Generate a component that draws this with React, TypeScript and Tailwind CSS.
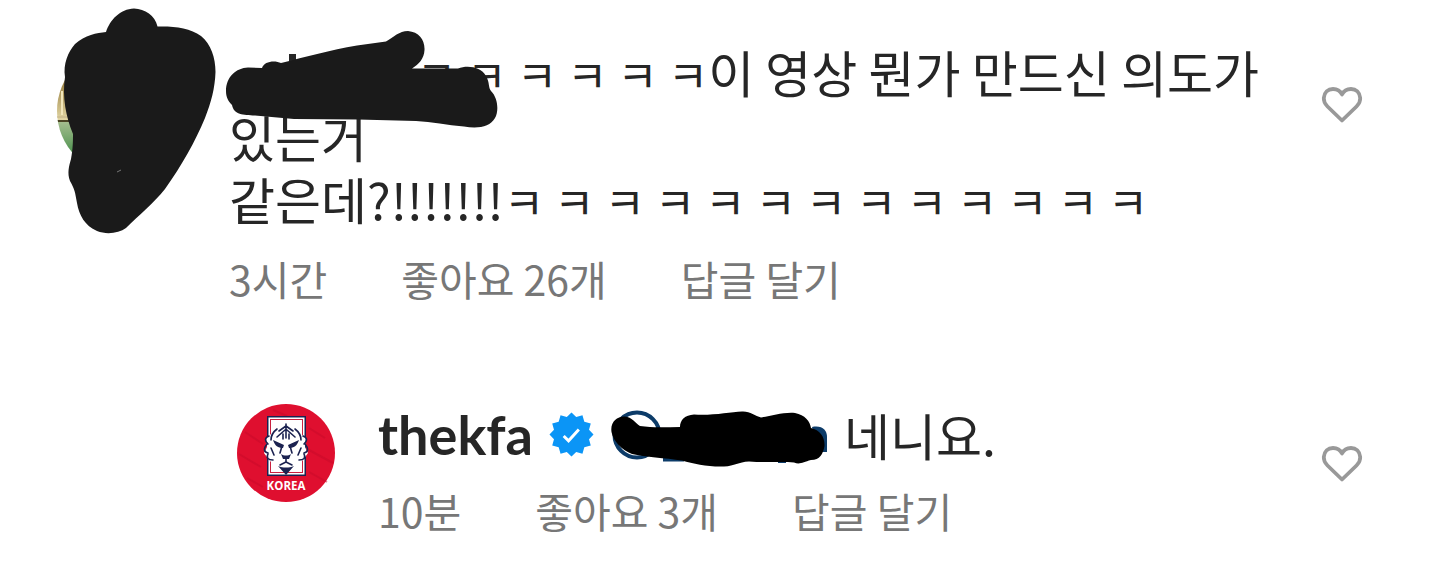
import { useState } from "react";

function HeartButton({ label }: { label: string }) {
  const [liked, setLiked] = useState(false);

  return (
    <button type="button" aria-label={label} aria-pressed={liked} onClick={() => setLiked(!liked)} className="shrink-0">
      <svg width="42" height="38" viewBox="0 0 42 38" fill={liked ? "#ed4956" : "none"}>
        <path
          d="M21 34.5 L6.5 20.5 C3.6 17.6 2.6 15 2.8 12 C3.2 6.6 7 3 12 3 C16 3 19.3 5 21 8.500 C22.7 5 26 3 30 3 C35 3 38.8 6.6 39.2 12 C39.4 15 38.4 17.6 35.5 20.5 Z"
          stroke={liked ? "#ed4956" : "#999999"}
          strokeWidth="3.8"
          strokeLinejoin="round"
        />
      </svg>
    </button>
  );
}

function Meta({ time, likes }: { time: string; likes: string }) {
  return (
    <div className="flex flex-wrap gap-x-[74px] text-[41px] leading-[60px] text-[#777777]">
      <span>{time}</span>
      <button type="button">{likes}</button>
      <button type="button">답글 달기</button>
    </div>
  );
}

function CommenterAvatar() {
  return (
    <div className="relative size-32 shrink-0">
      <svg viewBox="0 0 128 128" className="size-full">
        <defs>
          <clipPath id="photo">
            <circle cx="64" cy="64" r="64" />
          </clipPath>
          <linearGradient id="wall" x1="0" y1="0" x2="0" y2="1">
            <stop offset="0.4" stopColor="#8f7434" />
            <stop offset="1" stopColor="#e2d6a4" />
          </linearGradient>
          <linearGradient id="grass" x1="0" y1="0" x2="0" y2="1">
            <stop offset="0" stopColor="#a9c092" />
            <stop offset="0.6" stopColor="#4f9350" />
          </linearGradient>
        </defs>
        <g clipPath="url(#photo)">
          <rect width="128" height="73" fill="url(#wall)" />
          <rect y="73" width="128" height="55" fill="url(#grass)" />
          <path d="M0 70H40" stroke="#cfc093" strokeWidth="2" />
          <path d="M0 74H40" stroke="#4b4424" strokeWidth="2" />
          <path d="M5 44V68" stroke="#f1e6bb" strokeWidth="2" />
        </g>
      </svg>
      <svg width="168" height="240" viewBox="57 0 168 240" className="absolute left-0 -top-[47px] max-w-none">
        <path
          d="M106 32 C110 20 120 9 134 8.500 C145 9 155 15 157.500 26.500 C174 26 190 28 201 36 C211 44 215.500 58 215.500 72 C215 88 211 103 205 118 C195 142 182 165 165 189 C153 204 139 215 126 228 C119 233 107 235 97 231 C85 226 79 215 77 203 C75 192 75 190 70 181 C67 173 69 166 71 159 C73 149 73 140 73 134 C66 117 62 97 65 77 C63 64 68 52 75 44 C85 35 97 33 106 32 Z"
          fill="#1a1a1a"
        />
        <path d="M117 172l4-2" stroke="#777" strokeWidth="1" />
      </svg>
    </div>
  );
}

function TeamAvatar() {
  return (
    <svg width="98" height="98" viewBox="0 0 98 98" className="shrink-0" role="img" aria-label="thekfa">
      <circle cx="49" cy="49" r="49" fill="#df0f2f" />
      <g stroke="#c70a29" strokeWidth="2" fill="none" opacity="0.5">
        <path d="M8 28l18 12M2 50l22 13M10 74l16 9M72 24l16 10M72 46l24 13M72 68l18 10M36 6l14 6" />
      </g>
      <rect x="30" y="12" width="39" height="60" fill="#1b2250" />
      <rect x="31.500" y="13.500" width="36" height="57" fill="#fff" />
      <rect x="33.500" y="15.500" width="32" height="53" fill="none" stroke="#c9213f" strokeWidth="1" />
      <path
        d="M40 22 L49 18 L58 22 L64 30 L69 34 L68 43 L71 49 L66 56 L62 60 L49 69 L36 60 L32 56 L27 49 L30 43 L29 34 L34 30 Z"
        fill="#fff"
      />
      <g fill="none" stroke="#1b2250" strokeWidth="1.6" strokeLinecap="round" strokeLinejoin="round">
        <path d="M49 20v14M49 22l-7 5M49 22l7 5M48 26l-8 7M50 26l8 7M46 30v5M52 30v5" />
        <path d="M40 25c-4 3-6 7-6 11M58 25c4 3 6 7 6 11M32 32c-5 2-4 5-1 8M66 32c5 2 4 5 1 8" />
        <path d="M30 40c-4 5-3 8 1 9M68 40c4 5 3 8-1 9M31 50c-2 4 0 6 5 6M67 50c2 4 0 6-5 6" />
        <path d="M34 44l3 7M64 44l-3 7" />
        <path d="M45 42l-2 7M53 42l2 7M49 54v4M49 58l-6 3M49 58l6 3" />
      </g>
      <path d="M36 36l11 5-1 3c-5 0-8-2-10-8ZM62 36l-11 5 1 3c5 0 8-2 10-8Z" fill="#1b2250" />
      <path d="M44 50c3 2 7 2 10 0l-2 5h-6ZM41 62c5 2 11 2 16 0l-8 9Z" fill="#1b2250" />
      <text x="49" y="86" textAnchor="middle" fill="#fff" fontSize="11.500" fontWeight="700" fontFamily="'Open Sans', 'Noto Sans', sans-serif">
        KOREA
      </text>
    </svg>
  );
}

function VerifiedBadge() {
  return (
    <svg width="45" height="45" viewBox="0 0 46 46" className="shrink-0" role="img" aria-label="인증됨">
      <path
        d="M23 0.500 L27.800 5.100 L34.200 3.300 L36.100 9.900 L42.700 11.700 L40.900 18.200 L45.500 23 L40.900 27.800 L42.700 34.300 L36.100 36.100 L34.200 42.700 L27.800 40.900 L23 45.500 L18.200 40.900 L11.800 42.700 L9.900 36.100 L3.300 34.300 L5.100 27.800 L0.500 23 L5.100 18.200 L3.300 11.700 L9.900 9.900 L11.800 3.300 L18.200 5.100 Z"
        fill="#0b95f6"
      />
      <path d="M15 24.500l5 5L30.500 18" fill="none" stroke="#fff" strokeWidth="3" />
    </svg>
  );
}

// Marker strokes over the mentioned account
function HiddenMention() {
  return (
    <svg width="218" height="60" viewBox="610 404 218 60" className="shrink-0 overflow-visible" aria-hidden="true">
      <circle cx="637" cy="435" r="22.500" fill="none" stroke="#0c3b68" strokeWidth="4" />
      <path d="M663 459.500H684M778 461h8" stroke="#0c3b68" strokeWidth="4" />
      <path d="M812 427c10-2 15 3 15 10v15h-9z" fill="#0c3b68" />
      <path
        d="M611.500 432 C610 422 617 416 625 416.500 C632 417 635 423 640 426 C653 428 667 427 680 427 C680 420 685 415 694 414.500 C711 416 730 412 742 411.500 C750 411 755 416 761 417.500 C772 416 783 412 795 413 C805 415 810 421 811 428 C820 430 825 437 824.500 446 C823 454 820 460 811 460 C803 462 800 465 794 462.500 C781 461 765 463 749 461.500 C738 462 735 466 724 466.500 C708 467 694 464 682 460.500 C665 458 645 457 632 454 C622 450 613 441 611.500 432 Z"
        fill="#000"
      />
    </svg>
  );
}

// Marker strokes over the commenter's name
function HiddenName() {
  return (
    <svg width="276" height="100" viewBox="224 30 276 100" className="absolute -left-[5px] -top-2.5 max-w-none" aria-hidden="true">
      <path d="M289 54h7v10h-7z" fill="#262626" />
      <path
        d="M226 91 C226 77 236 68 248 67.500 L262 68 C264 61 275 60 281 63 C306 57 330 50 357 45.500 L386 41.500 C394 37 399 31 408 31 C419 32 425 40 424.500 50 C424 59 419 64 412 68.500 L458 68.500 C468 65 481 67 486 76 C490 83 488 87 491 91 C498 98 499 111 495 118 C490 127 478 129 464 126.500 C447 125 432 122 416 121 L358 119.500 L294 119 L255 115.500 C243 115 234 115 232 105 C228 101 226 97 226 91 Z"
        fill="#1a1a1a"
      />
    </svg>
  );
}

export default function App() {
  return (
    <main className="min-h-screen bg-white pl-[57px] pr-[77px] pt-10 font-['Noto_Sans_CJK_KR',sans-serif] text-[#262626]">
      <article className="flex items-start">
        <div className="pt-[7px]">
          <CommenterAvatar />
        </div>
        <div className="relative ml-11 min-w-0 flex-1">
          <p className="pr-8 text-[50px] leading-[62px]">
            <span className="inline-block w-[187px]" />
            <span className="text-[44px]">ㅋ ㅋ ㅋ ㅋ ㅋ ㅋ</span>이 영상 뭔가 만드신 의도가 있는거
            <br />
            같은데?!!!!!!!<span className="text-[44px]">ㅋ ㅋ ㅋ ㅋ ㅋ ㅋ ㅋ ㅋ ㅋ ㅋ ㅋ ㅋ ㅋ</span>
          </p>
          <HiddenName />
          <div className="mt-4">
            <Meta time="3시간" likes="좋아요 26개" />
          </div>
        </div>
        <div className="pt-[46px]">
          <HeartButton label="댓글 좋아요" />
        </div>
      </article>

      <article className="mt-24 flex items-start pl-[180px]">
        <TeamAvatar />
        <div className="ml-[43px] min-w-0 flex-1">
          <div className="flex items-center text-[50px] leading-[59px]">
            <a href="#thekfa" className="font-['Lato',sans-serif] text-[54px] font-bold">
              thekfa
            </a>
            <span className="ml-4 mr-4 flex">
              <VerifiedBadge />
            </span>
            <HiddenMention />
            <p className="ml-4">네니요.</p>
          </div>
          <div className="mt-4">
            <Meta time="10분" likes="좋아요 3개" />
          </div>
        </div>
        <div className="pt-[41px]">
          <HeartButton label="답글 좋아요" />
        </div>
      </article>
    </main>
  );
}
